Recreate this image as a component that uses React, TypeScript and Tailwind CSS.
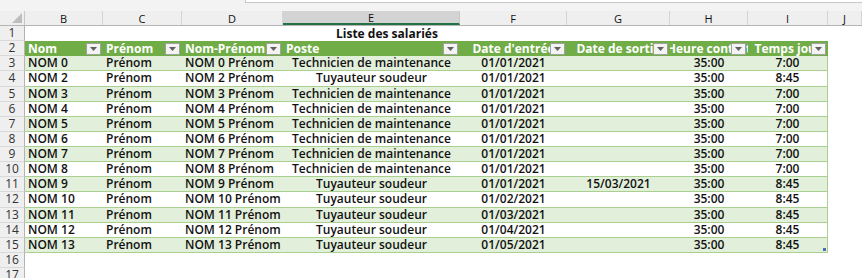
const widths = [
  "w-[25px]",
  "w-[78px]",
  "w-[79px]",
  "w-[101px]",
  "w-[177px]",
  "w-[107px]",
  "w-[103px]",
  "w-[78px]",
  "w-[80px]",
  "w-[34px]",
];

const letters = ["B", "C", "D", "E", "F", "G", "H", "I", "J"];

const headers = [
  { label: "Nom", align: "justify-start pl-[3px]" },
  { label: "Prénom", align: "justify-start pl-[3px]" },
  { label: "Nom-Prénom", align: "justify-start pl-[3px]" },
  { label: "Poste", align: "justify-start pl-[3px]" },
  { label: "Date d'entrée", align: "justify-center" },
  { label: "Date de sortie", align: "justify-center" },
  { label: "Heure contrat", align: "justify-center" },
  { label: "Temps jour", align: "justify-center" },
];

const cellAlign = [
  "justify-start pl-[3px]",
  "justify-start pl-[3px]",
  "justify-start pl-[3px]",
  "justify-center",
  "justify-center",
  "justify-center",
  "justify-center",
  "justify-center",
];

const TECH = "Technicien de maintenance";
const TUY = "Tuyauteur soudeur";

// rows 3 to 15 of the sheet
const data: string[][] = [
  ["NOM 0", "Prénom", "NOM 0 Prénom", TECH, "01/01/2021", "", "35:00", "7:00"],
  ["NOM 2", "Prénom", "NOM 2 Prénom", TUY, "01/01/2021", "", "35:00", "8:45"],
  ["NOM 3", "Prénom", "NOM 3 Prénom", TECH, "01/01/2021", "", "35:00", "7:00"],
  ["NOM 4", "Prénom", "NOM 4 Prénom", TECH, "01/01/2021", "", "35:00", "7:00"],
  ["NOM 5", "Prénom", "NOM 5 Prénom", TECH, "01/01/2021", "", "35:00", "7:00"],
  ["NOM 6", "Prénom", "NOM 6 Prénom", TECH, "01/01/2021", "", "35:00", "7:00"],
  ["NOM 7", "Prénom", "NOM 7 Prénom", TECH, "01/01/2021", "", "35:00", "7:00"],
  ["NOM 8", "Prénom", "NOM 8 Prénom", TECH, "01/01/2021", "", "35:00", "7:00"],
  ["NOM 9", "Prénom", "NOM 9 Prénom", TUY, "01/01/2021", "15/03/2021", "35:00", "8:45"],
  ["NOM 10", "Prénom", "NOM 10 Prénom", TUY, "01/02/2021", "", "35:00", "8:45"],
  ["NOM 11", "Prénom", "NOM 11 Prénom", TUY, "01/03/2021", "", "35:00", "8:45"],
  ["NOM 12", "Prénom", "NOM 12 Prénom", TUY, "01/04/2021", "", "35:00", "8:45"],
  ["NOM 13", "Prénom", "NOM 13 Prénom", TUY, "01/05/2021", "", "35:00", "8:45"],
];

function RowNum({ n }: { n: number }) {
  return (
    <div
      className={`${widths[0]} shrink-0 h-full flex items-center justify-center bg-[#efefef] border-r border-r-[#b4b4b4] border-b border-b-[#d9d9d9] text-[12px] leading-none text-[#333]`}
    >
      {n}
    </div>
  );
}

function FilterButton() {
  return (
    <div className="absolute right-[2px] bottom-[1px] w-[15px] h-[12px] bg-[#f3f3f3] border border-[#a0a0a0] flex items-center justify-center">
      <svg width="7" height="4" viewBox="0 0 7 4">
        <path d="M0 0 H7 L3.5 4 Z" fill="#606060" />
      </svg>
    </div>
  );
}

export default function App() {
  return (
    <div
      className="w-[862px] h-[278px] overflow-hidden bg-white text-[#111]"
      style={{ fontFamily: '"Open Sans", "Liberation Sans", sans-serif' }}
    >
      {/* strip under the formula bar */}
      <div className="h-[11px] bg-[#f3f3f3] flex">
        <div className="w-[245px]" />
        <div className="flex-1 h-[3px] bg-white border-l border-b border-[#c8c8c8]" />
      </div>

      {/* column letters */}
      <div className="flex h-[15px] bg-[#efefef] border-b border-[#b4b4b4]">
        <div className={`${widths[0]} shrink-0 h-full relative border-r border-[#c8c8c8]`}>
          <svg className="absolute right-[2px] bottom-[2px]" width="10" height="10" viewBox="0 0 10 10">
            <path d="M10 0 V10 H0 Z" fill="#bdbdbd" />
          </svg>
        </div>
        {letters.map((l, i) => (
          <div
            key={l}
            className={`${widths[i + 1]} shrink-0 h-full flex items-center justify-center text-[11px] leading-none ${
              l === "E"
                ? "bg-[#d3d3d3] border-b-2 border-b-[#217346] border-r border-r-[#c8c8c8]"
                : "border-r border-[#d4d4d4]"
            }`}
          >
            {l}
          </div>
        ))}
      </div>

      {/* row 1 : title */}
      <div className="flex h-[15.14px]">
        <RowNum n={1} />
        <div className={`${widths[1]} shrink-0`} />
        <div className={`${widths[2]} shrink-0`} />
        <div className={`${widths[3]} shrink-0`} />
        <div className={`${widths[4]} shrink-0 flex items-center pl-[53px] text-[12px] leading-none font-bold whitespace-nowrap`}>
          Liste des salariés
        </div>
      </div>

      {/* row 2 : table header */}
      <div className="flex h-[15.14px]">
        <RowNum n={2} />
        {headers.map((h, i) => (
          <div
            key={h.label}
            className={`${widths[i + 1]} shrink-0 h-full relative overflow-hidden flex items-center ${h.align} bg-[#70ad47] text-white text-[12px] leading-none font-bold whitespace-nowrap`}
          >
            {h.label}
            <FilterButton />
          </div>
        ))}
      </div>

      {/* rows 3 to 15 */}
      {data.map((row, r) => (
        <div key={r} className="flex h-[15.14px]">
          <RowNum n={r + 3} />
          {row.map((v, c) => (
            <div
              key={c}
              className={`${widths[c + 1]} shrink-0 h-full relative flex items-center ${cellAlign[c]} ${
                r % 2 === 0 ? "bg-[#e2efda]" : "bg-white"
              } border-b border-[#a9d08e] ${c === 7 ? "border-r" : ""} text-[12px] leading-none font-semibold whitespace-nowrap`}
            >
              {v}
              {c === 7 && r === data.length - 1 && (
                <div className="absolute right-[1px] bottom-[1px] w-[3px] h-[3px] bg-[#4a6fb3]" />
              )}
            </div>
          ))}
        </div>
      ))}

      {/* rows 16, 17 */}
      {[16, 17].map((n) => (
        <div key={n} className="flex h-[15.14px]">
          <RowNum n={n} />
        </div>
      ))}
    </div>
  );
}
